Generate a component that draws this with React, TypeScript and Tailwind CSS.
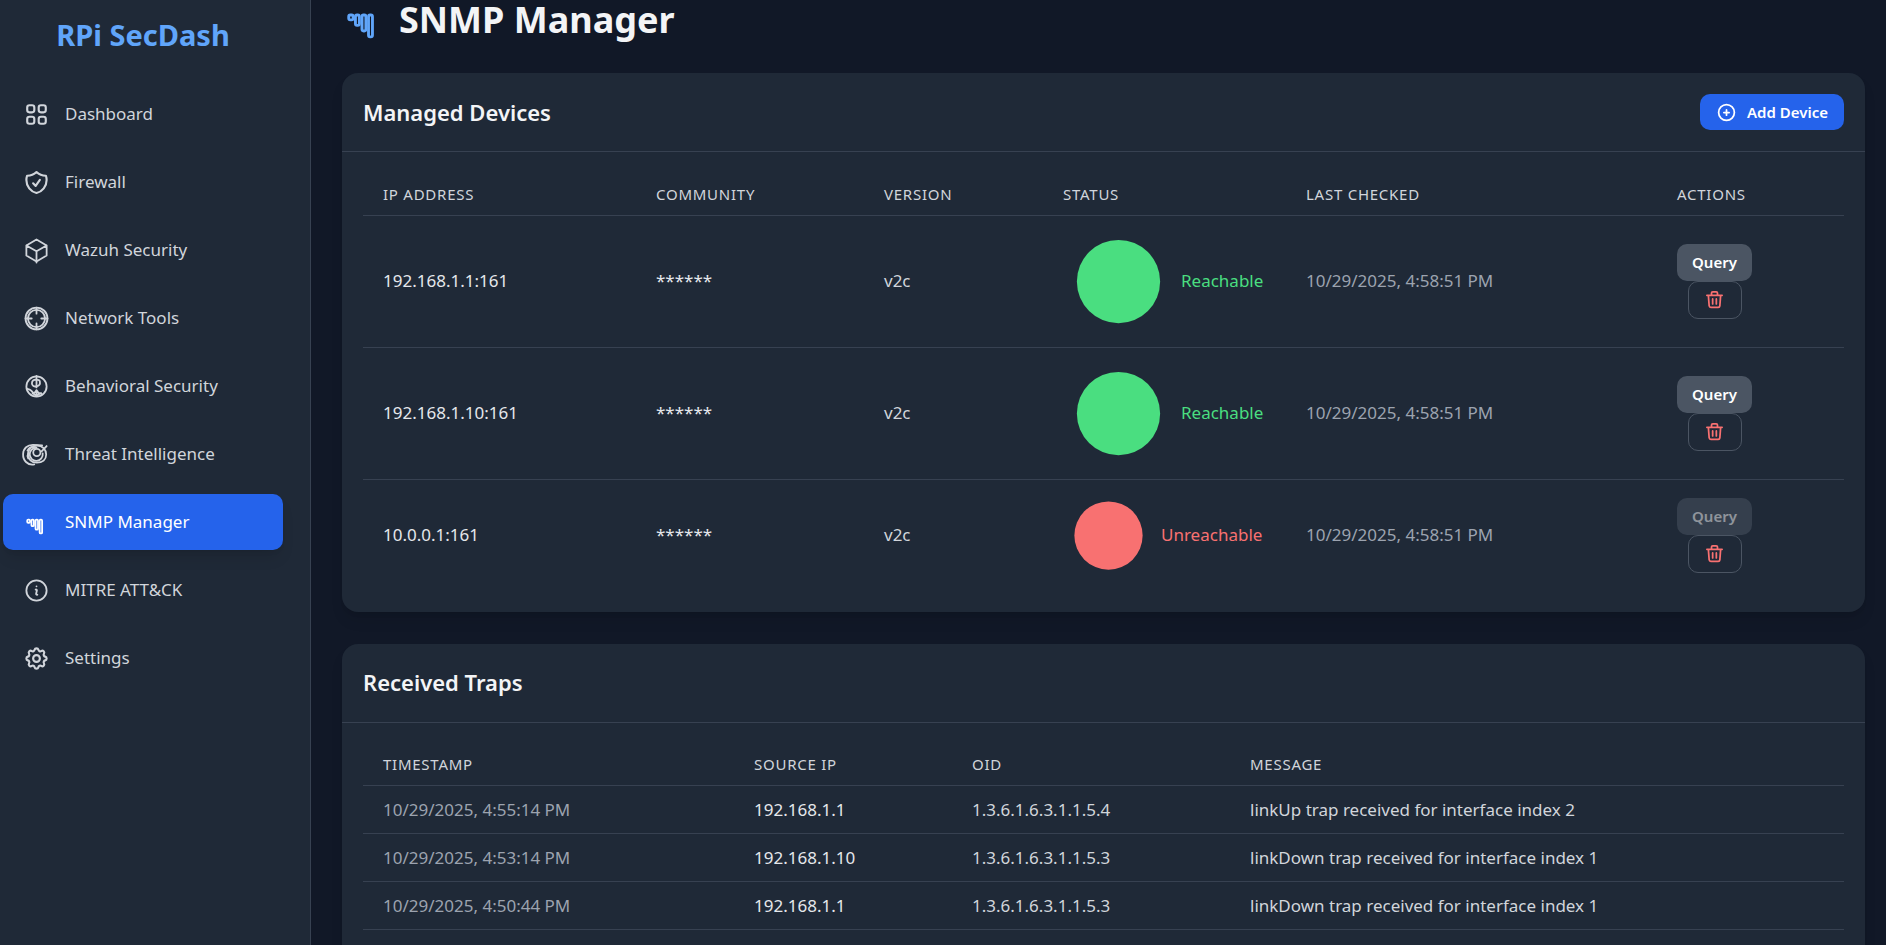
import type { ReactNode } from "react";

type IconProps = { className?: string; strokeWidth?: number; children: ReactNode };

function Icon({ className = "size-[27px]", strokeWidth = 1.6, children }: IconProps) {
  return (
    <svg
      className={`shrink-0 overflow-visible ${className}`}
      viewBox="0 0 24 24"
      fill="none"
      stroke="currentColor"
      strokeWidth={strokeWidth}
      strokeLinecap="round"
      strokeLinejoin="round"
      aria-hidden="true"
    >
      {children}
    </svg>
  );
}

function SnmpIcon({ className }: { className?: string }) {
  return (
    <Icon className={className}>
      <rect x="3.75" y="9.5" width="2.5" height="2.7" rx="0.9" />
      <rect x="7.5" y="9.5" width="2.2" height="5.8" rx="0.9" />
      <rect x="11.15" y="9.5" width="2.2" height="8.9" rx="0.9" />
      <rect x="14.8" y="9.5" width="2.2" height="12.2" rx="0.9" />
    </Icon>
  );
}

const navItems: { label: string; icon: ReactNode; active?: boolean }[] = [
  {
    label: "Dashboard",
    icon: (
      <Icon strokeWidth={1.9}>
        <rect x="3.75" y="3.75" width="6.3" height="6.3" rx="2" />
        <rect x="13.95" y="3.75" width="6.3" height="6.3" rx="2" />
        <rect x="3.75" y="13.95" width="6.3" height="6.3" rx="2" />
        <rect x="13.95" y="13.95" width="6.3" height="6.3" rx="2" />
      </Icon>
    ),
  },
  {
    label: "Firewall",
    icon: (
      <Icon strokeWidth={1.9}>
        <path d="M9 12.75 11.25 15 15 9.75m-3-7.036A11.959 11.959 0 0 1 3.598 6 11.99 11.99 0 0 0 3 9.749c0 5.592 3.824 10.29 9 11.623 5.176-1.332 9-6.03 9-11.622 0-1.31-.21-2.571-.598-3.751h-.152c-3.196 0-6.1-1.248-8.25-3.285Z" />
      </Icon>
    ),
  },
  {
    label: "Wazuh Security",
    icon: (
      <Icon>
        <path d="m21 7.5-9-5.25L3 7.5m18 0-9 5.25m9-5.25v9l-9 5.25M3 7.5l9 5.25M3 7.5v9l9 5.25m0-9v9.9" />
      </Icon>
    ),
  },
  {
    label: "Network Tools",
    icon: (
      <Icon>
        <circle cx="12" cy="12" r="9.75" />
        <circle cx="12" cy="12" r="7.6" />
        <path d="M12 2.25v5.5M12 16.25v5.5M2.25 12h5.5M16.25 12h5.5" />
      </Icon>
    ),
  },
  {
    label: "Behavioral Security",
    icon: (
      <Icon>
        <circle cx="12" cy="12" r="9" />
        <path d="M12 2.5v10.3M12 6.2a3 3 0 1 0 0 5.6c2.6-.2 3.4-1.8 3-4.2-.2-1.2-1.4-1.8-3-1.4" />
        <path d="M3.8 14.2c2 .2 3.8 1.4 5 3.2M8.7 18.2c1.6-.4 2.8-1.4 3.3-3 .6 1.8 2 3 4.4 3.3M12 15.2v5.2M8.5 18l3.5 2.3 4-2.6" />
      </Icon>
    ),
  },
  {
    label: "Threat Intelligence",
    icon: (
      <Icon>
        <path d="M10 20.8C4 22-.2 17 .1 11.5.3 6.5 4 3.4 9 3.5l8 .3" />
        <path d="M4.5 12c0-4.5 3-8 7.8-8 5 0 8.3 3.5 8.3 8s-3.3 7.2-8.3 7.2c-4.8 0-7.8-3-7.8-7.2Z" />
        <path d="M12 6a5.8 5.8 0 1 0 5.5 5M4 8.5c1.5-2.8 4.5-4 8-2.5M4.6 15.5c-.8-1.6-.8-3.2.2-5" />
        <circle cx="12.3" cy="10.2" r="3.2" />
        <path d="m21 4.5-4.5 4.7" />
      </Icon>
    ),
  },
  { label: "SNMP Manager", icon: <SnmpIcon className="size-[27px]" />, active: true },
  {
    label: "MITRE ATT&CK",
    icon: (
      <Icon>
        <path d="m11.25 11.25.041-.02a.75.75 0 0 1 1.063.852l-.708 2.836a.75.75 0 0 0 1.063.853l.041-.021M21 12a9 9 0 1 1-18 0 9 9 0 0 1 18 0Zm-9-3.75h.008v.008H12V8.25Z" />
      </Icon>
    ),
  },
  {
    label: "Settings",
    icon: (
      <Icon strokeWidth={1.9}>
        <path d="M10.325 4.317c.426-1.756 2.924-1.756 3.35 0a1.724 1.724 0 002.573 1.066c1.543-.94 3.31.826 2.37 2.37a1.724 1.724 0 001.065 2.572c1.756.426 1.756 2.924 0 3.35a1.724 1.724 0 00-1.066 2.573c.94 1.543-.826 3.31-2.37 2.37a1.724 1.724 0 00-2.572 1.065c-.426 1.756-2.924 1.756-3.35 0a1.724 1.724 0 00-2.573-1.066c-1.543.94-3.31-.826-2.37-2.37a1.724 1.724 0 00-1.065-2.572c-1.756-.426-1.756-2.924 0-3.35a1.724 1.724 0 001.066-2.573c-.94-1.543.826-3.31 2.37-2.37.996.608 2.296.07 2.572-1.065z" />
        <circle cx="12" cy="12" r="3" />
      </Icon>
    ),
  },
];

const devices = [
  { ip: "192.168.1.1:161", version: "v2c", reachable: true, checked: "10/29/2025, 4:58:51 PM" },
  { ip: "192.168.1.10:161", version: "v2c", reachable: true, checked: "10/29/2025, 4:58:51 PM" },
  { ip: "10.0.0.1:161", version: "v2c", reachable: false, checked: "10/29/2025, 4:58:51 PM" },
];

const traps = [
  { time: "10/29/2025, 4:55:14 PM", source: "192.168.1.1", oid: "1.3.6.1.6.3.1.1.5.4", message: "linkUp trap received for interface index 2" },
  { time: "10/29/2025, 4:53:14 PM", source: "192.168.1.10", oid: "1.3.6.1.6.3.1.1.5.3", message: "linkDown trap received for interface index 1" },
  { time: "10/29/2025, 4:50:44 PM", source: "192.168.1.1", oid: "1.3.6.1.6.3.1.1.5.3", message: "linkDown trap received for interface index 1" },
];

function Sidebar() {
  return (
    <aside className="w-[311px] shrink-0 border-r border-[#374151] bg-[#1f2937] pt-3">
      <div className="mb-7 w-[286px] text-center text-[29px] leading-[46px] font-bold text-[#60a5fa]">RPi SecDash</div>
      <nav className="flex flex-col gap-3 pr-[27px] pl-[3px]">
        {navItems.map((item) => (
          <a
            key={item.label}
            href="#"
            aria-current={item.active ? "page" : undefined}
            className={`flex h-14 items-center gap-[15px] rounded-[10px] pl-5 text-[17px] ${
              item.active ? "bg-[#2563eb] text-white shadow-lg" : "text-[#d1d5db]"
            }`}
          >
            {item.icon}
            {item.label}
          </a>
        ))}
      </nav>
    </aside>
  );
}

function Card({ title, action, children }: { title: string; action?: ReactNode; children: ReactNode }) {
  return (
    <section className="rounded-2xl bg-[#1f2937] shadow-lg">
      <div className="flex h-[79px] items-center justify-between border-b border-[#374151] px-[21px]">
        <h2 className="text-[22px] font-semibold text-[#f3f4f6]">{title}</h2>
        {action}
      </div>
      <div className="p-[21px]">{children}</div>
    </section>
  );
}

function HeadRow({ labels }: { labels: string[] }) {
  return (
    <thead>
      <tr className="h-[42px] border-b border-[#374151] text-left text-[15px] tracking-wider text-[#d1d5db]">
        {labels.map((label) => (
          <th key={label} scope="col" className="px-5 font-normal uppercase">
            {label}
          </th>
        ))}
      </tr>
    </thead>
  );
}

export default function App() {
  return (
    <div className="flex h-screen overflow-hidden bg-[#111827] font-['Noto_Sans',sans-serif] text-[17px] text-[#e5e7eb]">
      <Sidebar />
      <main className="min-w-0 flex-1 pr-[21px] pl-[31px]">
        <header className="mb-[34px] flex h-[39px] items-center gap-[14px]">
          <SnmpIcon className="size-[43px] text-[#60a5fa]" />
          <h1 className="text-4xl leading-[39px] font-bold text-[#f3f4f6]">SNMP Manager</h1>
        </header>
        <div className="flex flex-col gap-8">
          <Card
            title="Managed Devices"
            action={
              <button
                type="button"
                className="flex h-9 items-center gap-[10px] rounded-[10px] bg-[#2563eb] px-4 text-[15px] font-semibold text-white"
              >
                <Icon className="size-[21px]" strokeWidth={2}>
                  <path d="M12 9v6m3-3H9m12 0a9 9 0 1 1-18 0 9 9 0 0 1 18 0Z" />
                </Icon>
                Add Device
              </button>
            }
          >
            <table className="w-full table-fixed border-collapse">
              <colgroup>
                <col className="w-[273px]" />
                <col className="w-[228px]" />
                <col className="w-[179px]" />
                <col className="w-[243px]" />
                <col className="w-[371px]" />
                <col className="w-[187px]" />
              </colgroup>
              <HeadRow labels={["IP Address", "Community", "Version", "Status", "Last Checked", "Actions"]} />
              <tbody>
                {devices.map((device) => (
                  <tr key={device.ip} className="border-b border-[#374151] last:border-b-0">
                    <td className="px-5">{device.ip}</td>
                    <td className="px-5">******</td>
                    <td className="px-5 text-[#d1d5db]">{device.version}</td>
                    <td className="px-5 py-[10px] whitespace-nowrap">
                      <span className={`flex items-center gap-[7px] ${device.reachable ? "text-[#4ade80]" : "text-[#f87171]"}`}>
                        <svg
                          viewBox="0 0 24 24"
                          fill="currentColor"
                          className={`shrink-0 ${device.reachable ? "size-[111px]" : "size-[91px]"}`}
                          aria-hidden="true"
                        >
                          <circle cx="12" cy="12" r="9" />
                        </svg>
                        {device.reachable ? "Reachable" : "Unreachable"}
                      </span>
                    </td>
                    <td className="px-5 text-[#9ca3af]">{device.checked}</td>
                    <td className="px-5">
                      <div className="flex w-[75px] flex-col items-center">
                        <button
                          type="button"
                          disabled={!device.reachable}
                          className="h-[37px] w-full rounded-[10px] bg-[#4b5563] text-[15px] font-semibold text-white disabled:opacity-50"
                        >
                          Query
                        </button>
                        <button
                          type="button"
                          aria-label={`Delete ${device.ip}`}
                          className="flex h-[38px] w-[54px] items-center justify-center rounded-[10px] border border-[#4b5563] text-[#f87171]"
                        >
                          <Icon className="size-[21px]" strokeWidth={2}>
                            <path d="M3.3 7.2h17.4M8.6 7V4.6c0-.9.6-1.4 1.4-1.4h4c.8 0 1.4.5 1.4 1.4V7M5 7.4l.9 11.8c.1 1.1.8 1.7 1.9 1.7h8.4c1.1 0 1.8-.6 1.9-1.7L19 7.4M9.9 11.3v5.7M14.1 11.3v5.7" />
                          </Icon>
                        </button>
                      </div>
                    </td>
                  </tr>
                ))}
              </tbody>
            </table>
          </Card>
          <Card title="Received Traps">
            <table className="mb-6 w-full table-fixed border-collapse">
              <colgroup>
                <col className="w-[371px]" />
                <col className="w-[218px]" />
                <col className="w-[278px]" />
                <col className="w-[614px]" />
              </colgroup>
              <HeadRow labels={["Timestamp", "Source IP", "OID", "Message"]} />
              <tbody>
                {traps.map((trap) => (
                  <tr key={trap.time} className="h-12 border-b border-[#374151]">
                    <td className="px-5 text-[#9ca3af]">{trap.time}</td>
                    <td className="px-5">{trap.source}</td>
                    <td className="px-5 text-[#d1d5db]">{trap.oid}</td>
                    <td className="px-5 text-[#d1d5db]">{trap.message}</td>
                  </tr>
                ))}
              </tbody>
            </table>
          </Card>
        </div>
      </main>
    </div>
  );
}
